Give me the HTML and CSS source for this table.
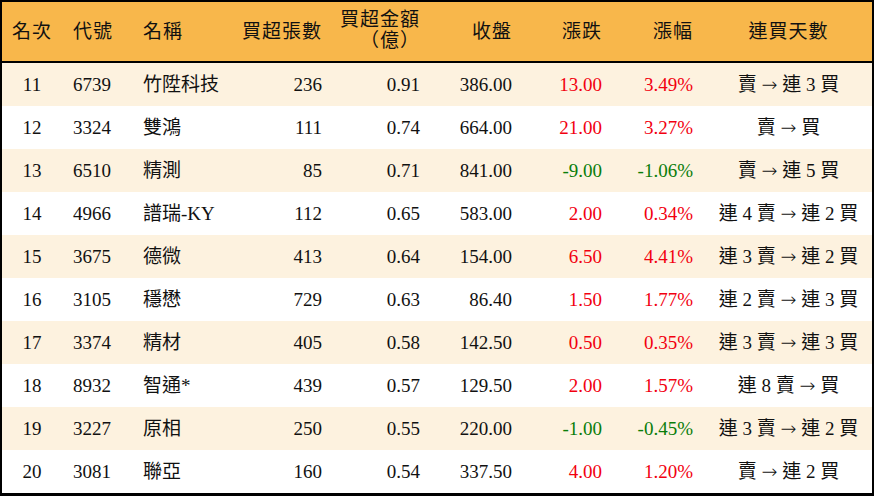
FILE: index.html
```html
<!DOCTYPE html>
<html lang="zh-Hant">
<head>
<meta charset="utf-8">
<title>買超排行</title>
<link rel="stylesheet" href="styles.css">
</head>
<body>
<div class="board">
  <div class="row head">
    <div class="c c1">名次</div>
    <div class="c c2">代號</div>
    <div class="c c3">名稱</div>
    <div class="c c4">買超張數</div>
    <div class="c c5 two"><span>買超金額</span><span>（億）</span></div>
    <div class="c c6">收盤</div>
    <div class="c c7">漲跌</div>
    <div class="c c8">漲幅</div>
    <div class="c c9">連買天數</div>
  </div>
  <div class="row odd">
    <div class="c c1">11</div><div class="c c2">6739</div><div class="c c3">竹陞科技</div><div class="c c4">236</div><div class="c c5">0.91</div><div class="c c6">386.00</div><div class="c c7 up">13.00</div><div class="c c8 up">3.49%</div><div class="c c9">賣 <span class="arr">→</span> 連 3 買</div>
  </div>
  <div class="row">
    <div class="c c1">12</div><div class="c c2">3324</div><div class="c c3">雙鴻</div><div class="c c4">111</div><div class="c c5">0.74</div><div class="c c6">664.00</div><div class="c c7 up">21.00</div><div class="c c8 up">3.27%</div><div class="c c9">賣 <span class="arr">→</span> 買</div>
  </div>
  <div class="row odd">
    <div class="c c1">13</div><div class="c c2">6510</div><div class="c c3">精測</div><div class="c c4">85</div><div class="c c5">0.71</div><div class="c c6">841.00</div><div class="c c7 down">-9.00</div><div class="c c8 down">-1.06%</div><div class="c c9">賣 <span class="arr">→</span> 連 5 買</div>
  </div>
  <div class="row">
    <div class="c c1">14</div><div class="c c2">4966</div><div class="c c3">譜瑞-KY</div><div class="c c4">112</div><div class="c c5">0.65</div><div class="c c6">583.00</div><div class="c c7 up">2.00</div><div class="c c8 up">0.34%</div><div class="c c9">連 4 賣 <span class="arr">→</span> 連 2 買</div>
  </div>
  <div class="row odd">
    <div class="c c1">15</div><div class="c c2">3675</div><div class="c c3">德微</div><div class="c c4">413</div><div class="c c5">0.64</div><div class="c c6">154.00</div><div class="c c7 up">6.50</div><div class="c c8 up">4.41%</div><div class="c c9">連 3 賣 <span class="arr">→</span> 連 2 買</div>
  </div>
  <div class="row">
    <div class="c c1">16</div><div class="c c2">3105</div><div class="c c3">穩懋</div><div class="c c4">729</div><div class="c c5">0.63</div><div class="c c6">86.40</div><div class="c c7 up">1.50</div><div class="c c8 up">1.77%</div><div class="c c9">連 2 賣 <span class="arr">→</span> 連 3 買</div>
  </div>
  <div class="row odd">
    <div class="c c1">17</div><div class="c c2">3374</div><div class="c c3">精材</div><div class="c c4">405</div><div class="c c5">0.58</div><div class="c c6">142.50</div><div class="c c7 up">0.50</div><div class="c c8 up">0.35%</div><div class="c c9">連 3 賣 <span class="arr">→</span> 連 3 買</div>
  </div>
  <div class="row">
    <div class="c c1">18</div><div class="c c2">8932</div><div class="c c3">智通*</div><div class="c c4">439</div><div class="c c5">0.57</div><div class="c c6">129.50</div><div class="c c7 up">2.00</div><div class="c c8 up">1.57%</div><div class="c c9">連 8 賣 <span class="arr">→</span> 買</div>
  </div>
  <div class="row odd">
    <div class="c c1">19</div><div class="c c2">3227</div><div class="c c3">原相</div><div class="c c4">250</div><div class="c c5">0.55</div><div class="c c6">220.00</div><div class="c c7 down">-1.00</div><div class="c c8 down">-0.45%</div><div class="c c9">連 3 賣 <span class="arr">→</span> 連 2 買</div>
  </div>
  <div class="row">
    <div class="c c1">20</div><div class="c c2">3081</div><div class="c c3">聯亞</div><div class="c c4">160</div><div class="c c5">0.54</div><div class="c c6">337.50</div><div class="c c7 up">4.00</div><div class="c c8 up">1.20%</div><div class="c c9">賣 <span class="arr">→</span> 連 2 買</div>
  </div>
</div>
</body>
</html>
```
FILE: styles.css
```css
html, body {
  margin: 0;
  padding: 0;
  background: #ffffff;
}
body {
  font-family: "Liberation Serif", "Noto Sans CJK TC", serif;
  font-size: 19px;
  color: #111111;
}
.board {
  width: 870px;
  height: 491px;
  border: 2px solid #000;
  border-bottom-width: 3px;
  display: flex;
  flex-direction: column;
}
.row {
  display: grid;
  grid-template-columns: 60px 70px 110px 90px 98px 92px 90px 91px 169px;
  height: 43px;
  align-items: center;
  background: #ffffff;
}
.row.odd {
  background: #fdf2df;
}
.row.head {
  height: 59px;
  background: #f8b74b;
  border-bottom: 2px solid #000;
}
.head .c {
  letter-spacing: 1px;
}
.c {
  white-space: nowrap;
  line-height: 22px;
}
.c1 { text-align: center; }
.c2, .c3 { padding-left: 11px; }
.c4, .c5, .c6, .c7, .c8 { text-align: right; padding-right: 10px; }
.c9 { text-align: center; padding-left: 2px; }
.arr {
  font-family: "DejaVu Sans", sans-serif;
  font-weight: 200;
  font-size: 19px;
}
.two {
  display: flex;
  flex-direction: column;
  align-items: flex-end;
  line-height: 21px;
  margin-top: -4px;
}
.up { color: #f2000f; }
.down { color: #0a7d0a; }
```
